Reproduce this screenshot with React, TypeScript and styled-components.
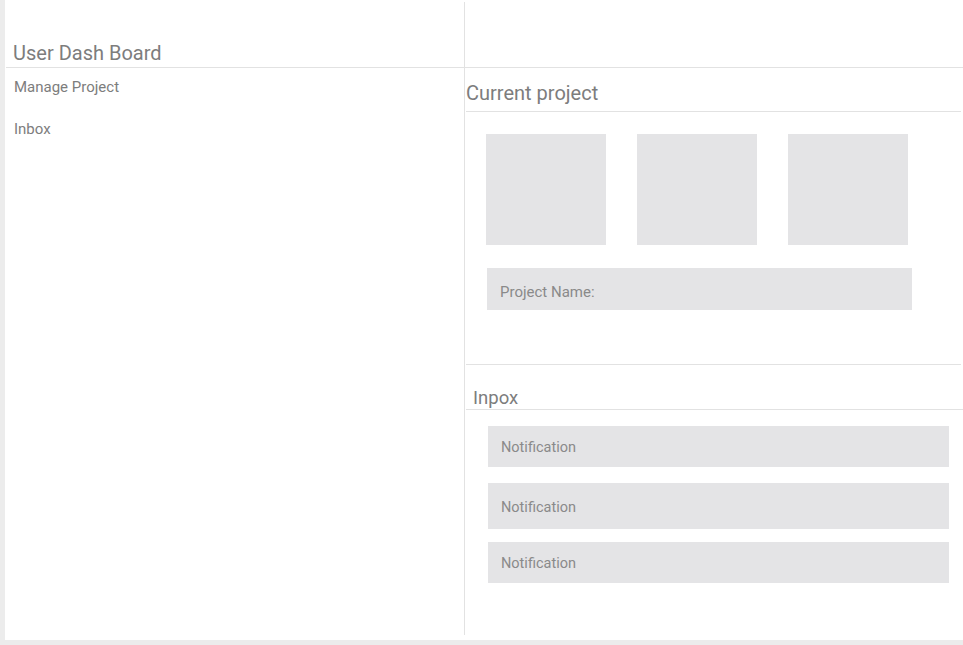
import React from "react";
import styled, { createGlobalStyle } from "styled-components";

const GlobalStyle = createGlobalStyle`
  html, body {
    margin: 0;
    padding: 0;
    background: #ececec;
  }
  body {
    font-family: Roboto, "Liberation Sans", sans-serif;
    color: #7d7d7d;
  }
`;

const Page = styled.div`
  width: 963px;
  height: 645px;
  padding: 0 0 5px 5px;
  box-sizing: border-box;
`;

const Panel = styled.div`
  background: #fff;
  height: 640px;
  padding-top: 2px;
  box-sizing: border-box;
  display: flex;
`;

const Sidebar = styled.aside`
  width: 459px;
  height: 633px;
  border-right: 1px solid #e2e2e2;
  display: flex;
  flex-direction: column;
`;

const Main = styled.main`
  flex: 1;
  display: flex;
  flex-direction: column;
`;

const TopBar = styled.div<{ $flush?: boolean }>`
  height: 66px;
  border-bottom: 1px solid #e2e2e2;
  display: flex;
  align-items: flex-end;
  padding: 0 0 4px 7px;
  box-sizing: border-box;
  margin-left: ${(p) => (p.$flush ? "0" : "1px")};
`;

const Title = styled.h1`
  margin: 0;
  font-size: 20px;
  font-weight: 400;
  line-height: 20px;
  color: #7d7d7d;
`;

const Nav = styled.nav`
  display: flex;
  flex-direction: column;
  gap: 25px;
  padding: 11px 0 0 9px;
`;

const NavItem = styled.a`
  font-size: 15px;
  line-height: 17px;
  color: #7d7d7d;
  text-decoration: none;
`;

const SectionTitle = styled.h2<{ $indent?: number; $gap: number; $size?: number }>`
  margin: 0;
  font-size: ${(p) => p.$size ?? 20}px;
  font-weight: 400;
  line-height: 20px;
  color: #7d7d7d;
  padding: 0 0 ${(p) => p.$gap}px ${(p) => p.$indent ?? 0}px;
  border-bottom: 1px solid #e2e2e2;
`;

const CurrentSection = styled.section`
  padding-top: 15px;
  margin: 0 2px 0 1px;
  height: 297px;
  border-bottom: 1px solid #e2e2e2;
  box-sizing: border-box;
`;

const Thumbs = styled.div`
  display: flex;
  gap: 31px;
  padding: 22px 0 0 20px;
`;

const Thumb = styled.div`
  width: 120px;
  height: 111px;
  background: #e4e4e6;
`;

const Field = styled.div<{ $w: number; $h: number; $size: number; $drop: number }>`
  width: ${(p) => p.$w}px;
  height: ${(p) => p.$h}px;
  background: #e4e4e6;
  display: flex;
  align-items: center;
  padding: ${(p) => p.$drop}px 0 0 13px;
  box-sizing: border-box;
  font-size: ${(p) => p.$size}px;
  color: #8a8a8a;
`;

const NameRow = styled.div`
  padding: 23px 0 0 21px;
`;

const InboxSection = styled.section`
  padding-top: 23px;
  margin-left: 1px;
`;

const Notes = styled.div`
  display: flex;
  flex-direction: column;
  padding: 0 0 0 22px;
`;

const NoteSlot = styled.div<{ $top: number }>`
  padding-top: ${(p) => p.$top}px;
`;

const notifications = [
  { top: 16, h: 41 },
  { top: 16, h: 46 },
  { top: 13, h: 41 },
];

export default function App() {
  return (
    <>
      <GlobalStyle />
      <Page>
        <Panel>
          <Sidebar>
            <TopBar>
              <Title>User Dash Board</Title>
            </TopBar>
            <Nav>
              <NavItem>Manage Project</NavItem>
              <NavItem>Inbox</NavItem>
            </Nav>
          </Sidebar>
          <Main>
            <TopBar $flush />
            <CurrentSection>
              <SectionTitle $gap={8}>Current project</SectionTitle>
              <Thumbs>
                <Thumb />
                <Thumb />
                <Thumb />
              </Thumbs>
              <NameRow>
                <Field $w={425} $h={42} $size={15} $drop={6}>
                  Project Name:
                </Field>
              </NameRow>
            </CurrentSection>
            <InboxSection>
              <SectionTitle $indent={7} $gap={1} $size={18.5}>
                Inpox
              </SectionTitle>
              <Notes>
                {notifications.map((n, i) => (
                  <NoteSlot key={i} $top={n.top}>
                    <Field $w={461} $h={n.h} $size={14.5} $drop={2}>
                      Notification
                    </Field>
                  </NoteSlot>
                ))}
              </Notes>
            </InboxSection>
          </Main>
        </Panel>
      </Page>
    </>
  );
}
